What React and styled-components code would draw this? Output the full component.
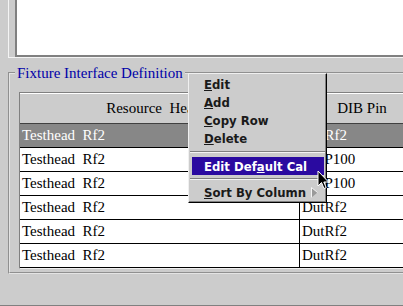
import React from "react";
import styled, { createGlobalStyle } from "styled-components";

const GlobalStyle = createGlobalStyle`
  html, body {
    margin: 0;
    padding: 0;
    background: #cccccc;
    overflow: hidden;
  }
`;

const rows = [
  { resource: "Testhead  Rf2", pin: "DutRf2", selected: true },
  { resource: "Testhead  Rf2", pin: "DutP100" },
  { resource: "Testhead  Rf2", pin: "DutP100" },
  { resource: "Testhead  Rf2", pin: "DutRf2" },
  { resource: "Testhead  Rf2", pin: "DutRf2" },
  { resource: "Testhead  Rf2", pin: "DutRf2" },
];

const App = () => {
  return (
    <>
      <GlobalStyle />
      <Window>
        <TopPanel>
          <TopGroove>
            <WhiteBox />
          </TopGroove>
        </TopPanel>

        <GroupBox>
          <GroupLabel>Fixture Interface Definition</GroupLabel>
          <TableFrame>
            <HeaderRow>
              <HeaderCell $width={279}>Resource&nbsp;&nbsp;Header</HeaderCell>
              <HeaderCell $width={126}>DIB Pin</HeaderCell>
            </HeaderRow>
            {rows.map((row, i) => (
              <Row key={i} $selected={row.selected}>
                <Cell $width={279}>{row.resource}</Cell>
                <Cell $width={126} $divider>
                  {row.pin}
                </Cell>
              </Row>
            ))}
          </TableFrame>
        </GroupBox>

        <Footer />

        <Menu>
          <MenuItem>
            <span>
              <u>E</u>dit
            </span>
          </MenuItem>
          <MenuItem>
            <span>
              <u>A</u>dd
            </span>
          </MenuItem>
          <MenuItem>
            <span>
              <u>C</u>opy Row
            </span>
          </MenuItem>
          <MenuItem>
            <span>
              <u>D</u>elete
            </span>
          </MenuItem>
          <Separator $space={4} />
          <MenuItem $active>
            <span>
              Edit Def<u>a</u>ult Cal
            </span>
          </MenuItem>
          <Separator $space={3} />
          <MenuItem>
            <span>
              <u>S</u>ort By Column
            </span>
            <SubArrow width="7" height="11" viewBox="0 0 7 11">
              <polygon points="0.5,0.5 6.5,5.5 0.5,10.5" fill="#9a9a9a" />
              <polyline
                points="0.5,10.5 0.5,0.5 6.5,5.5"
                fill="none"
                stroke="#f4f4f4"
                strokeWidth="1"
              />
            </SubArrow>
          </MenuItem>
        </Menu>

        <Cursor width="13" height="21" viewBox="0 0 13 21">
          <path
            d="M1 1 L1 16 L4.5 12.5 L7 18.5 L9.2 17.6 L6.8 12 L11.5 12 Z"
            fill="#000"
            stroke="#fff"
            strokeWidth="1"
            strokeLinejoin="miter"
          />
        </Cursor>
      </Window>
    </>
  );
};

const Window = styled.div`
  position: relative;
  width: 403px;
  height: 306px;
  overflow: hidden;
  background: #cccccc;
  display: flex;
  flex-direction: column;
`;

const TopPanel = styled.div`
  padding-left: 8px;
`;

const TopGroove = styled.div`
  border-left: 1px solid #f4f4f4;
  border-bottom: 1px solid #f4f4f4;
  padding-left: 6px;
`;

const WhiteBox = styled.div`
  height: 55px;
  background: #ffffff;
  border-left: 2px solid #808080;
  border-bottom: 2px solid #808080;
`;

const GroupBox = styled.fieldset`
  margin: 6px -60px 0 8px;
  padding: 10px 0 3px 9px;
  border: 2px groove #e4e4e4;
  border-right: none;
  min-width: 0;
`;

const GroupLabel = styled.legend`
  margin-left: -4px;
  padding: 0 2px;
  font-family: "Liberation Serif", "DejaVu Serif", serif;
  font-size: 15px;
  line-height: 18px;
  color: #0000a8;
`;

const TableFrame = styled.div`
  border-top: 1px solid #808080;
  border-left: 1px solid #808080;
  border-bottom: 1px solid #f0f0f0;
  background: #ffffff;
`;

const HeaderRow = styled.div`
  display: flex;
  height: 29px;
  background: #cccccc;
  border-top: 1px solid #ffffff;
  border-bottom: 1px solid #404040;
`;

const HeaderCell = styled.div`
  width: ${(p) => p.$width}px;
  flex: none;
  display: flex;
  align-items: center;
  justify-content: center;
  font-family: "Liberation Serif", "DejaVu Serif", serif;
  font-size: 15px;
  color: #000;
  white-space: pre;
`;

const Row = styled.div`
  display: flex;
  height: 23px;
  border-bottom: 1px solid #000;
  background: ${(p) => (p.$selected ? "#878787" : "#ffffff")};
  color: ${(p) => (p.$selected ? "#ffffff" : "#000000")};
`;

const Cell = styled.div`
  width: ${(p) => p.$width}px;
  flex: none;
  box-sizing: border-box;
  display: flex;
  align-items: center;
  padding-left: 2px;
  border-left: ${(p) => (p.$divider ? "1px solid #000" : "none")};
  font-family: "Liberation Serif", "DejaVu Serif", serif;
  font-size: 15px;
  white-space: pre;
`;

const Footer = styled.div`
  flex: 1;
  border-bottom: 1px solid #808080;
`;

const Menu = styled.div`
  position: absolute;
  left: 188px;
  top: 73px;
  width: 137px;
  box-sizing: content-box;
  padding: 1px 0 1px;
  background: #cccccc;
  border-top: 1px solid #f0f0f0;
  border-left: 1px solid #f0f0f0;
  border-right: 1px solid #000;
  border-bottom: 1px solid #000;
  box-shadow: inset -1px -1px 0 #808080;
`;

const MenuItem = styled.div`
  display: flex;
  align-items: center;
  justify-content: space-between;
  height: 18px;
  margin: 0 2px 0 3px;
  padding: 0 6px 0 12px;
  font-family: "DejaVu Sans Condensed", "DejaVu Sans", sans-serif;
  font-stretch: condensed;
  font-weight: bold;
  font-size: 13px;
  line-height: 15px;
  white-space: pre;
  background: ${(p) => (p.$active ? "#2a0aa0" : "transparent")};
  color: ${(p) => (p.$active ? "#ffffff" : "#1a1a1a")};

  u {
    text-decoration-thickness: 1px;
    text-underline-offset: 1px;
  }
`;

const Separator = styled.div`
  margin: ${(p) => p.$space}px 1px;
  border-top: 1px solid #808080;
  border-bottom: 1px solid #f4f4f4;
`;

const SubArrow = styled.svg`
  display: block;
  flex: none;
`;

const Cursor = styled.svg`
  position: absolute;
  left: 317px;
  top: 170px;
`;

export default App;
